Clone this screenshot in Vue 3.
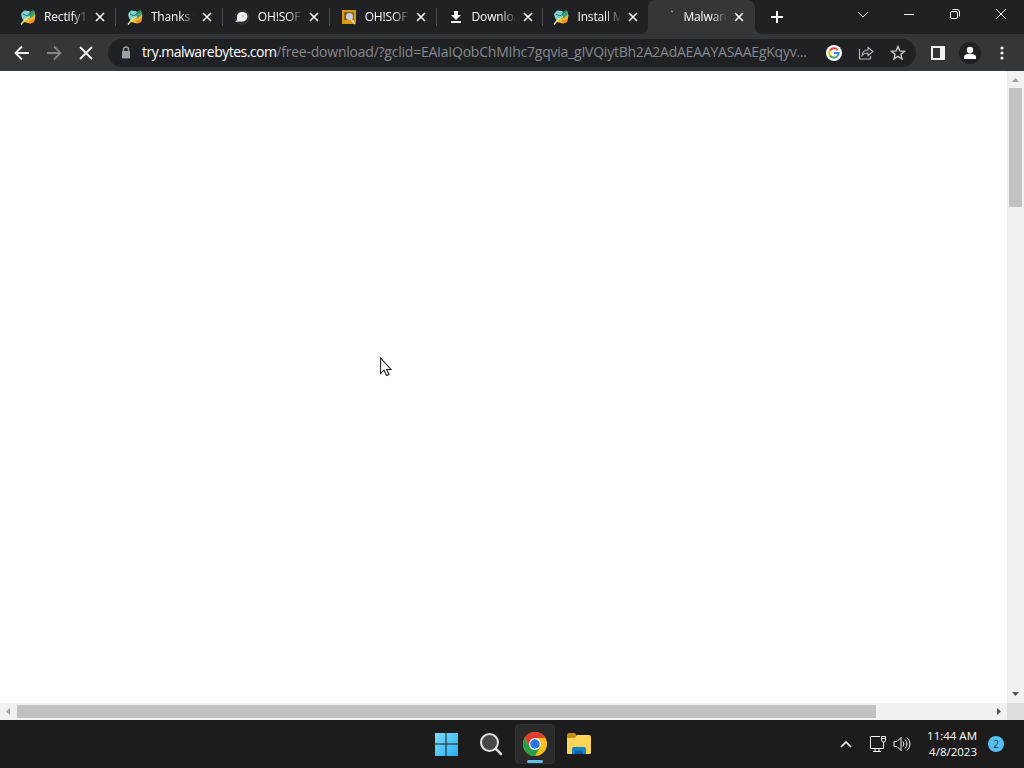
<template>
  <div class="screen">
    <header class="tab-strip">
      <div class="tabs">
        <div v-for="(tab, index) in tabs" :key="index" class="tab" :class="{ active: index === 6, last: index >= 5 }">
          <svg v-if="index === 6" class="tab-curve" width="123" height="34" viewBox="0 0 123 34">
            <path fill="#35363a" d="M0 34c5 0 8-3 8-8V8c0-5 3-8 8-8h91c5 0 8 3 8 8v18c0 5 3 8 8 8z" />
          </svg>
          <svg class="favicon" width="16" height="16" viewBox="0 0 16 16">
            <g v-if="tab.icon === 'paint'">
              <path fill="#f3bd2c" d="M5 5l8-3 2.500 4-1.500 7-4 1.500-6-1.500-1-4z" />
              <path fill="#7fd2cf" d="M1 5l3-3.500L9 2l2 2-2 5-5 3-2-3z" />
              <path fill="#3d9d73" d="M9 4l4-3 2 2-.5 3L11 9l-3 1z" />
              <path fill="#ef8f1f" d="M9 12l6-3-1 4-4 1.500z" />
              <path stroke="#24697a" d="M3 5l4 2 6-5" fill="none" />
              <path stroke="#e8e8a0" stroke-width="1.300" d="M1 15.500l4-5 5-3" fill="none" />
            </g>
            <g v-else-if="tab.icon === 'bubble'">
              <circle cx="8" cy="8" r="7" fill="#242725" stroke="#4b4e49" stroke-dasharray="2 1" />
              <path fill="#eee" d="M3 11l-2 2 5-.5c4 1 7.500-1.500 7.500-5S11 3 8 3 3 5 3 8z" />
              <circle cx="9" cy="7" r="1" fill="#bbb" />
            </g>
            <g v-else-if="tab.icon === 'search'">
              <path fill="#d99a0a" d="M1 1h14v12l-3 2H1z" />
              <path fill="#84601d" d="M3 3h10v8H3z" />
              <path stroke="#e7d5b4" stroke-width="2" d="M10 10l4 5" />
              <circle cx="8.500" cy="7.500" r="3.500" fill="#c8ced8" />
            </g>
            <path v-else-if="tab.icon === 'download'" fill="#fff" d="M6 2h4v4h3l-5 5-5-5h3zM3 12h10v2H3z" />
            <path v-else stroke="#b3b5b8" d="M12 2l2 1" />
          </svg>
          <span class="title">{{ tab.title }}</span>
          <svg class="close" width="10" height="10" viewBox="0 0 10 10"><path d="M1 1l8 8M9 1L1 9" /></svg>
        </div>
      </div>
      <button class="new-tab"><svg width="14" height="14" viewBox="0 0 14 14"><path d="M7 1v12M1 7h12" stroke="#fff" stroke-width="2" /></svg></button>
      <div class="window-buttons">
        <svg width="46" height="30" viewBox="0 0 46 30"><path d="M18 12l5 5 5-5" /></svg>
        <svg width="46" height="30" viewBox="0 0 46 30"><path d="M18 14.500h10" /></svg>
        <svg width="46" height="30" viewBox="0 0 46 30">
          <rect x="18.500" y="11.500" width="7" height="7" rx="1.500" />
          <path d="M20.500 9.500h4.500q2.500 0 2.500 2.500v4.500" />
        </svg>
        <svg width="46" height="30" viewBox="0 0 46 30"><path d="M18 9l10 10M28 9L18 19" /></svg>
      </div>
    </header>

    <nav class="toolbar">
      <div class="navigation">
        <svg width="32" height="32" viewBox="0 0 32 32"><path d="M23 16H10M16 9.500L9.500 16l6.500 6.500" /></svg>
        <svg class="muted" width="32" height="32" viewBox="0 0 32 32"><path d="M9 16h13M16 9.500l6.500 6.500-6.500 6.500" /></svg>
        <svg width="32" height="32" viewBox="0 0 32 32"><path d="M10 10l12 12M22 10L10 22" /></svg>
      </div>
      <div class="address">
        <svg class="lock" width="10" height="14" viewBox="0 0 10 14">
          <path d="M2.500 6V3.500a2.500 2.500 0 0 1 5 0V6" fill="none" stroke="#9aa0a6" stroke-width="1.400" />
          <rect x="1" y="5" width="8" height="7.500" rx="1" fill="#9aa0a6" />
        </svg>
        <span class="url"><b>try.malwarebytes.com</b><span>/free-download/?gclid=EAIaIQobChMIhc7gqvia_gIVQiytBh2A2AdAEAAYASAAEgKqyv...</span></span>
        <div class="address-icons">
          <svg width="16" height="16" viewBox="0 0 16 16">
            <circle cx="8" cy="8" r="8" fill="#fff" />
            <g fill="none" stroke-width="2">
              <path stroke="#ea4335" d="M4 5.500A4.700 4.700 0 0 1 11.500 4.800" />
              <path stroke="#fbbc05" d="M4 5.500a4.700 4.700 0 0 0 0 5" />
              <path stroke="#34a853" d="M4 10.500a4.700 4.700 0 0 0 7 1" />
              <path stroke="#4285f4" d="M8 8h4.700a4.700 4.700 0 0 1-1.700 3.500" />
            </g>
          </svg>
          <svg width="16" height="16" viewBox="0 0 16 16" fill="none" stroke="#b4b7bc" stroke-width="1.100">
            <path d="M1.500 4v10h11v-3M4 10.500c.5-4 2.500-5.500 6-5.500V2.500l5 4-5 4V8C7.500 8 5.500 8.500 4 10.500z" />
          </svg>
          <svg width="16" height="16" viewBox="0 0 16 16" fill="none" stroke="#c4c7cc" stroke-width="1.400">
            <path d="M8 1.500l1.800 4.400 4.700.4-3.600 3 1.100 4.600L8 11.400l-4 2.500 1.100-4.600-3.600-3 4.700-.4z" />
          </svg>
        </div>
      </div>
      <div class="browser-actions">
        <svg width="14" height="14" viewBox="0 0 14 14"><path fill="#f1f3f4" fill-rule="evenodd" d="M0 0h14v14H0zM2 2v10h7V2z" /></svg>
        <svg width="24" height="24" viewBox="0 0 24 24">
          <circle cx="12" cy="12" r="11" fill="#202124" />
          <circle cx="12" cy="9" r="3.200" fill="#fff" />
          <path fill="#fff" d="M6 18v-2c0-2 3-3.200 6-3.200s6 1.200 6 3.200v2z" />
        </svg>
        <svg width="4" height="16" viewBox="0 0 4 16" fill="#f1f3f4"><circle cx="2" cy="3" r="1.600" /><circle cx="2" cy="8" r="1.600" /><circle cx="2" cy="13" r="1.600" /></svg>
      </div>
    </nav>

    <main class="viewport">
      <div class="page"></div>
      <div class="scrollbar vertical">
        <svg class="dim" width="17" height="17" viewBox="0 0 17 17"><path d="M5 11l3.500-4 3.500 4z" /></svg>
        <div class="thumb"></div>
        <svg width="17" height="17" viewBox="0 0 17 17"><path d="M5 6h7l-3.500 4z" /></svg>
      </div>
      <div class="scrollbar horizontal">
        <svg class="dim" width="17" height="17" viewBox="0 0 17 17"><path d="M10 5v7L6 8.500z" /></svg>
        <div class="thumb"></div>
        <svg width="17" height="17" viewBox="0 0 17 17"><path d="M7 5v7l4-3.500z" /></svg>
      </div>
      <div class="corner"></div>
      <svg class="cursor" width="13" height="21" viewBox="0 0 13 21">
        <path fill="#fff" stroke="#222" stroke-width="1.100" d="M.6 1v15.500l3.400-3.300L6.500 18.500l2.500-1-2.300-5H11z" />
      </svg>
    </main>

    <footer class="taskbar">
      <div class="apps">
        <div class="app windows">
          <svg width="24" height="24" viewBox="0 0 24 24">
            <defs><linearGradient id="win" x2="1" y2="1"><stop stop-color="#7bdcfb" /><stop offset="1" stop-color="#2baeee" /></linearGradient></defs>
            <path fill="url(#win)" d="M1 1h10.500v10.500H1zM12.500 1H24v10.500H12.500zM1 12.500h10.500V24H1zM12.500 12.500H24V24H12.500z" />
          </svg>
        </div>
        <div class="app">
          <svg width="24" height="24" viewBox="0 0 24 24">
            <path stroke="#d4d4d4" stroke-width="2.500" stroke-linecap="round" d="M17 17l5 5" />
            <circle cx="10.500" cy="10.500" r="8.500" fill="#484848" stroke="#e2e2e2" stroke-width="2" />
          </svg>
        </div>
        <div class="app current">
          <svg width="24" height="24" viewBox="0 0 24 24">
            <circle cx="12" cy="12" r="12" fill="#fbc116" />
            <path fill="#e33b2e" d="M1.600 6a12 12 0 0 1 20.800 0H12L6.800 15z" />
            <path fill="#269f46" d="M1.600 6a12 12 0 0 0 10.400 18l5.200-9L12 18l-5.200-3z" />
            <circle cx="12" cy="12" r="6" fill="#fff" />
            <circle cx="12" cy="12" r="4.700" fill="#2776e8" />
          </svg>
        </div>
        <div class="app">
          <svg width="26" height="24" viewBox="0 0 26 24">
            <path fill="#c58e18" d="M1 3q0-2 2-2h6l2 3v5H1z" />
            <path fill="#fcd457" d="M1 6h8l2-3h12q2 0 2 2v16q0 1-1 1H2q-1 0-1-1z" />
            <path fill="#1680c7" d="M6 22v-5q0-2 2-2h10q2 0 2 2v5z" />
            <path fill="#0862a8" d="M9 19h8v3H9z" />
          </svg>
        </div>
      </div>
      <div class="tray">
        <svg width="12" height="8" viewBox="0 0 12 8"><path stroke-width="1.600" d="M1 7l5-5 5 5" /></svg>
        <svg class="network" width="18" height="18" viewBox="0 0 18 18"><path d="M11 1.500H1.500v12h13V7M6 14v2.500M10 14v2.500M4 16.500h8M12.500 1.500h4V5q0 2-2 2t-2-2zM12.500 3.500h4" /></svg>
        <svg class="volume" width="18" height="18" viewBox="0 0 18 18"><path d="M1 6.500h3l4-4v13l-4-4H1zM10 6.500q2 2.500 0 5M12 4.500q4 4.500 0 9M14 2.500q6 6.500 0 13" /></svg>
        <div class="clock"><span>11:44 AM</span><span>4/8/2023</span></div>
        <span class="badge">2</span>
      </div>
    </footer>
  </div>
</template>

<script setup>
const tabs = [
  { title: 'Rectify11', icon: 'paint' },
  { title: 'Thanks for', icon: 'paint' },
  { title: 'OH!SOFT', icon: 'bubble' },
  { title: 'OH!SOFT', icon: 'search' },
  { title: 'Download', icon: 'download' },
  { title: 'Install Ma', icon: 'paint' },
  { title: 'Malwareb', icon: 'loading' }
];
</script>

<style>
body {
  margin: 0;
  overflow: hidden;
}
</style>

<style scoped>
.screen {
  width: 1024px;
  height: 768px;
  display: flex;
  flex-direction: column;
  overflow: hidden;
  font-family: "Open Sans", "Noto Sans", sans-serif;
  color: #fff;
  background: #fff;
}

svg {
  display: block;
  flex: none;
}

.tab-strip {
  height: 34px;
  flex: none;
  display: flex;
  background: #202124;
}

.tabs {
  display: flex;
  padding-left: 9px;
}

.tab {
  position: relative;
  box-sizing: border-box;
  width: 106.9px;
  height: 34px;
  padding-left: 11px;
  display: flex;
  align-items: center;
}

.tab.last {
  width: 106px;
  padding-left: 10px;
}

.tab:not(.last)::after {
  content: "";
  position: absolute;
  right: 0;
  top: 8px;
  width: 1px;
  height: 18px;
  background: #4b4c50;
}

.tab-curve {
  position: absolute;
  left: -9px;
  top: 0;
}

.favicon,
.title,
.close {
  position: relative;
}

.title {
  width: 43px;
  margin-left: 8px;
  overflow: hidden;
  white-space: nowrap;
  font-size: 12px;
  line-height: 18px;
  letter-spacing: -0.15px;
  mask-image: linear-gradient(to right, #000 65%, transparent 105%);
}

.close {
  margin-left: 8px;
  fill: none;
  stroke: #fff;
  stroke-width: 1.6;
}

.new-tab {
  width: 28px;
  height: 34px;
  margin-left: 8px;
  padding: 0;
  border: 0;
  background: none;
  display: flex;
  align-items: center;
  justify-content: center;
}

.window-buttons {
  display: flex;
  margin-left: auto;
  fill: none;
  stroke: #eee;
}

.toolbar {
  height: 37px;
  flex: none;
  display: flex;
  align-items: center;
  background: #35363a;
}

.navigation {
  display: flex;
  padding-left: 6px;
  fill: none;
  stroke: #f1f3f4;
  stroke-width: 1.8;
}

.navigation .muted {
  stroke: #85868a;
}

.address {
  box-sizing: border-box;
  width: 808px;
  height: 28px;
  margin-left: 6px;
  padding: 0 10px 0 13px;
  border-radius: 14px;
  display: flex;
  align-items: center;
  background: #202124;
}

.url {
  width: 668px;
  margin-left: 11px;
  padding-bottom: 1px;
  white-space: nowrap;
  font-size: 14px;
  line-height: 22px;
  letter-spacing: -0.23px;
  color: #85888c;
}

.url b {
  font-weight: 400;
  letter-spacing: -0.52px;
  color: #fff;
}

.address-icons {
  display: flex;
  gap: 16px;
  margin-left: auto;
}

.browser-actions {
  display: flex;
  align-items: center;
  margin-left: 15px;
  gap: 13px;
}

.browser-actions svg:last-child {
  margin-left: 5px;
}

.viewport {
  position: relative;
  height: 649px;
  flex: none;
  display: grid;
  grid-template: 632px 17px / 1007px 17px;
}

.scrollbar {
  display: flex;
  background: #f1f1f1;
  fill: #505050;
}

.scrollbar .dim {
  fill: #a3a3a3;
}

.vertical {
  flex-direction: column;
  justify-content: space-between;
}

.vertical .thumb {
  width: 13px;
  height: 119px;
  margin: 0 2px auto;
  background: #c1c1c1;
}

.horizontal .thumb {
  width: 859px;
  height: 13px;
  margin: 2px auto 2px 0;
  background: #c1c1c1;
}

.corner {
  background: #dcdcdc;
}

.cursor {
  position: absolute;
  left: 380px;
  top: 286px;
}

.taskbar {
  height: 48px;
  flex: none;
  display: flex;
  align-items: center;
  background: #1c1c1c;
}

.apps {
  display: flex;
  gap: 4px;
  margin-left: 427px;
}

.app {
  box-sizing: border-box;
  width: 40px;
  height: 40px;
  display: flex;
  align-items: center;
  justify-content: center;
}

.windows {
  padding-right: 2px;
}

.current {
  position: relative;
  border: 1px solid #303030;
  border-radius: 4px;
  background: #2a2a2a;
}

.current::after {
  content: "";
  position: absolute;
  bottom: 0;
  width: 16px;
  height: 3px;
  border-radius: 2px;
  background: #60bff0;
}

.tray {
  display: flex;
  align-items: center;
  margin-left: auto;
  padding-right: 20px;
  fill: none;
  stroke: #f5f5f5;
}

.network {
  margin-left: 17px;
}

.volume {
  margin-left: 6px;
}

.clock {
  width: 66px;
  display: flex;
  flex-direction: column;
  text-align: right;
  font-size: 11.5px;
  line-height: 16px;
}

.badge {
  width: 16px;
  height: 16px;
  margin-left: 11px;
  border-radius: 50%;
  text-align: center;
  font-size: 10px;
  line-height: 16px;
  color: #17394d;
  background: #56bff5;
}
</style>
